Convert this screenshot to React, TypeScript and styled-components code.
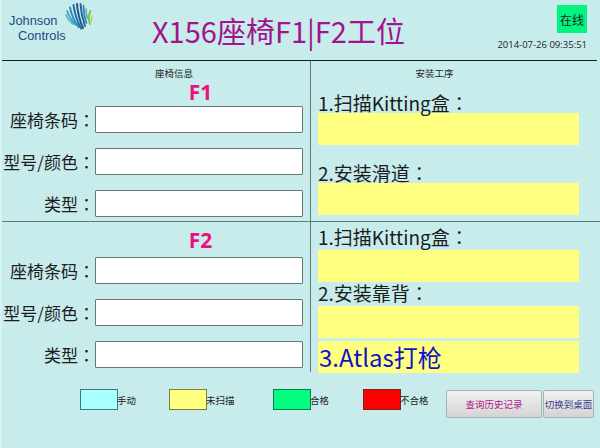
import React from "react";
import styled, { createGlobalStyle } from "styled-components";

const Global = createGlobalStyle`
  html, body { margin: 0; padding: 0; background: #c8ecec; }
  * { box-sizing: border-box; }
  body { font-family: "Noto Sans CJK SC", "Noto Sans", sans-serif; }
`;

const Page = styled.div`
  width: 600px;
  height: 448px;
  overflow: hidden;
  background: #c8ecec;
  color: #1c1c1c;
  display: flex;
  flex-direction: column;
  border-left: 2px solid #d6f4f4;
`;

const Header = styled.header`
  height: 61px;
  margin-right: 3px;
  border-bottom: 1px solid #10201f;
  display: flex;
`;

const LogoBox = styled.div`
  width: 150px;
  padding: 3px 0 0 7px;
  display: flex;
  align-items: flex-start;
`;

const LogoText = styled.div`
  font-family: "Liberation Sans", sans-serif;
  color: #1d4a80;
  font-size: 12.8px;
  line-height: 14.75px;
  margin-top: 11px;
  width: 56px;
  flex: none;
`;

const LogoLine = styled.div<{ $indent?: number }>`
  padding-left: ${(p) => p.$indent ?? 0}px;
  white-space: nowrap;
`;

const LogoMark = styled.svg`
  flex: none;
  display: block;
`;

const Title = styled.h1`
  margin: 9px 0 0;
  font-size: 29px;
  line-height: 42px;
  font-weight: 400;
  color: #a0148c;
  white-space: nowrap;
`;

const StatusArea = styled.div`
  margin-left: auto;
  padding-top: 5px;
  display: flex;
  flex-direction: column;
  align-items: flex-end;
`;

const Status = styled.div`
  width: 30px;
  height: 28px;
  margin-right: 10px;
  background: #00f57f;
  font-size: 12px;
  display: flex;
  align-items: center;
  justify-content: center;
`;

const DateText = styled.div`
  margin-top: 5px;
  margin-right: 10px;
  font-size: 9.5px;
  line-height: 14px;
  font-family: "Open Sans", "Noto Sans", sans-serif;
  white-space: nowrap;
`;

const Main = styled.main`
  height: 311px;
  display: grid;
  grid-template-columns: 309px 1fr;
  grid-template-rows: 161px 150px;
`;

const Cell = styled.section<{ $right?: boolean; $top?: boolean }>`
  ${(p) => p.$right && "padding-left: 7px;"}
  ${(p) => !p.$right && "border-right: 1px solid #5f7a7a;"}
  ${(p) => p.$top && "border-bottom: 1px solid #5f7a7a;"}
`;

const LeftHead = styled.div`
  font-size: 9.5px;
  line-height: 12px;
  text-align: center;
  padding: 6px 0 0 36px;
  height: 18px;
`;

const RightHead = styled.div`
  font-size: 9.5px;
  line-height: 12px;
  text-align: center;
  padding-top: 6px;
  height: 31px;
  margin-left: -7px;
  padding-right: 42px;
`;

const StationName = styled.div<{ $first?: boolean }>`
  color: #e8137a;
  font-weight: 700;
  font-size: 21px;
  line-height: 26px;
  text-align: center;
  padding-left: 89px;
  margin-top: ${(p) => (p.$first ? 0 : 5)}px;
  height: ${(p) => (p.$first ? 27 : 30)}px;
  font-family: "Noto Sans", "Open Sans", sans-serif;
`;

const Fields = styled.div`
  display: grid;
  grid-template-columns: 93px 208px;
  row-gap: 15px;
`;

const FieldLabel = styled.label`
  font-size: 17px;
  line-height: 27px;
  text-align: right;
  white-space: nowrap;
  display: flex;
  justify-content: flex-end;
`;

/* the full-width colon sits centred in its cell, as in the reference */
const Colon = styled.span`
  font-family: "Noto Sans CJK TC", sans-serif;
`;

const StepLabel = styled.div<{ $gap?: number; $top?: number }>`
  font-size: 19px;
  line-height: 21px;
  height: 21px;
  margin-top: ${(p) => p.$top ?? 0}px;
  margin-bottom: ${(p) => p.$gap ?? 0}px;
  white-space: nowrap;
`;

const Field = styled.div`
  height: 27px;
  background: #fff;
  border: 1px solid #6a7575;
  border-radius: 1px;
`;

const StepBar = styled.div<{ $gap?: number }>`
  width: 261px;
  height: 32px;
  background: #ffff80;
  margin-bottom: ${(p) => p.$gap ?? 0}px;
`;

const AtlasBar = styled.div`
  width: 261px;
  height: 32px;
  background: #ffff80;
  color: #1212c8;
  font-size: 24px;
  line-height: 31px;
  padding-left: 1px;
  white-space: nowrap;
`;

const Footer = styled.footer`
  flex: 1;
  display: flex;
  align-items: flex-start;
  padding-top: 17px;
`;

const Legend = styled.div<{ $width: number; $first?: boolean }>`
  width: ${(p) => p.$width}px;
  margin-left: ${(p) => (p.$first ? 78 : 0)}px;
  display: flex;
  align-items: center;
  font-size: 9.5px;
  height: 21px;
  white-space: nowrap;
`;

const Swatch = styled.div<{ $color: string; $edge: string }>`
  width: 38px;
  height: 21px;
  margin-right: -1px;
  background: ${(p) => p.$color};
  border: 1px solid ${(p) => p.$edge};
  flex: none;
`;

const Buttons = styled.div`
  display: flex;
  gap: 1px;
`;

const Button = styled.button<{ $width: number; $color: string }>`
  width: ${(p) => p.$width}px;
  height: 28px;
  padding: 0;
  margin-top: 1px;
  border: 1px solid #a8b4b4;
  border-radius: 2px;
  background: linear-gradient(#f2f2f2, #d4d4d4);
  color: ${(p) => p.$color};
  font: 9.5px "Noto Sans CJK SC", sans-serif;
  white-space: nowrap;
`;

const Logo = () => (
  <LogoMark width="28" height="27" viewBox="0 0 28 27" fill="none" strokeLinecap="round">
    <path d="M1 12 Q3 17 8 21" stroke="#4db3c8" strokeWidth="1.7" />
    <path d="M2 8 Q5 16 11 22" stroke="#35a3c4" strokeWidth="1.8" />
    <path d="M5 4.5 Q7 15 13.5 24" stroke="#2a8fba" strokeWidth="1.9" />
    <path d="M8.5 2 Q10 14 16 25.5" stroke="#1d6fa0" strokeWidth="2" />
    <path d="M12 1 Q13 14 18 25" stroke="#1a5a90" strokeWidth="2" />
    <path d="M15.5 1 Q16 12 20 23" stroke="#1d6498" strokeWidth="1.9" />
    <path d="M18.5 2.5 Q18.5 12 21.5 20" stroke="#2c8cae" strokeWidth="1.7" />
    <path d="M21 6 Q21 11 22.5 15" stroke="#43a8b4" strokeWidth="1.4" />
    <path d="M25.5 8 Q22.5 14 25 21" stroke="#86c440" strokeWidth="2" />
    <path d="M27 13 Q26.5 16 26.5 18" stroke="#a6d050" strokeWidth="1.2" />
  </LogoMark>
);

const Station = ({ name, first }: { name: string; first?: boolean }) => (
  <>
    <StationName $first={first}>{name}</StationName>
    <Fields>
      <FieldLabel>座椅条码<Colon>：</Colon></FieldLabel>
      <Field />
      <FieldLabel>型号/颜色<Colon>：</Colon></FieldLabel>
      <Field />
      <FieldLabel>类型<Colon>：</Colon></FieldLabel>
      <Field />
    </Fields>
  </>
);

export default function App() {
  return (
    <Page>
      <Global />
      <Header>
        <LogoBox>
          <LogoText>
            <LogoLine>Johnson</LogoLine>
            <LogoLine $indent={9}>Controls</LogoLine>
          </LogoText>
          <Logo />
        </LogoBox>
        <Title>X156座椅F1|F2工位</Title>
        <StatusArea>
          <Status>在线</Status>
          <DateText>2014-07-26 09:35:51</DateText>
        </StatusArea>
      </Header>
      <Main>
        <Cell $top>
          <LeftHead>座椅信息</LeftHead>
          <Station name="F1" first />
        </Cell>
        <Cell $top $right>
          <RightHead>安装工序</RightHead>
          <StepLabel>1.扫描Kitting盒<Colon>：</Colon></StepLabel>
          <StepBar $gap={17} />
          <StepLabel>2.安装滑道<Colon>：</Colon></StepLabel>
          <StepBar />
        </Cell>
        <Cell>
          <Station name="F2" />
        </Cell>
        <Cell $right>
          <StepLabel $top={4} $gap={3}>1.扫描Kitting盒<Colon>：</Colon></StepLabel>
          <StepBar />
          <StepLabel $gap={3}>2.安装靠背<Colon>：</Colon></StepLabel>
          <StepBar $gap={3} />
          <AtlasBar>3.Atlas打枪</AtlasBar>
        </Cell>
      </Main>
      <Footer>
        <Legend $width={89} $first><Swatch $color="#aaffff" $edge="#3d7a80" />手动</Legend>
        <Legend $width={104}><Swatch $color="#ffff80" $edge="#77803c" />未扫描</Legend>
        <Legend $width={90}><Swatch $color="#00ff80" $edge="#0a7a50" />合格</Legend>
        <Legend $width={83}><Swatch $color="#ff0000" $edge="#802020" />不合格</Legend>
        <Buttons>
          <Button $width={96} $color="#b0208c">查询历史记录</Button>
          <Button $width={51} $color="#3a3a90">切换到桌面</Button>
        </Buttons>
      </Footer>
    </Page>
  );
}
